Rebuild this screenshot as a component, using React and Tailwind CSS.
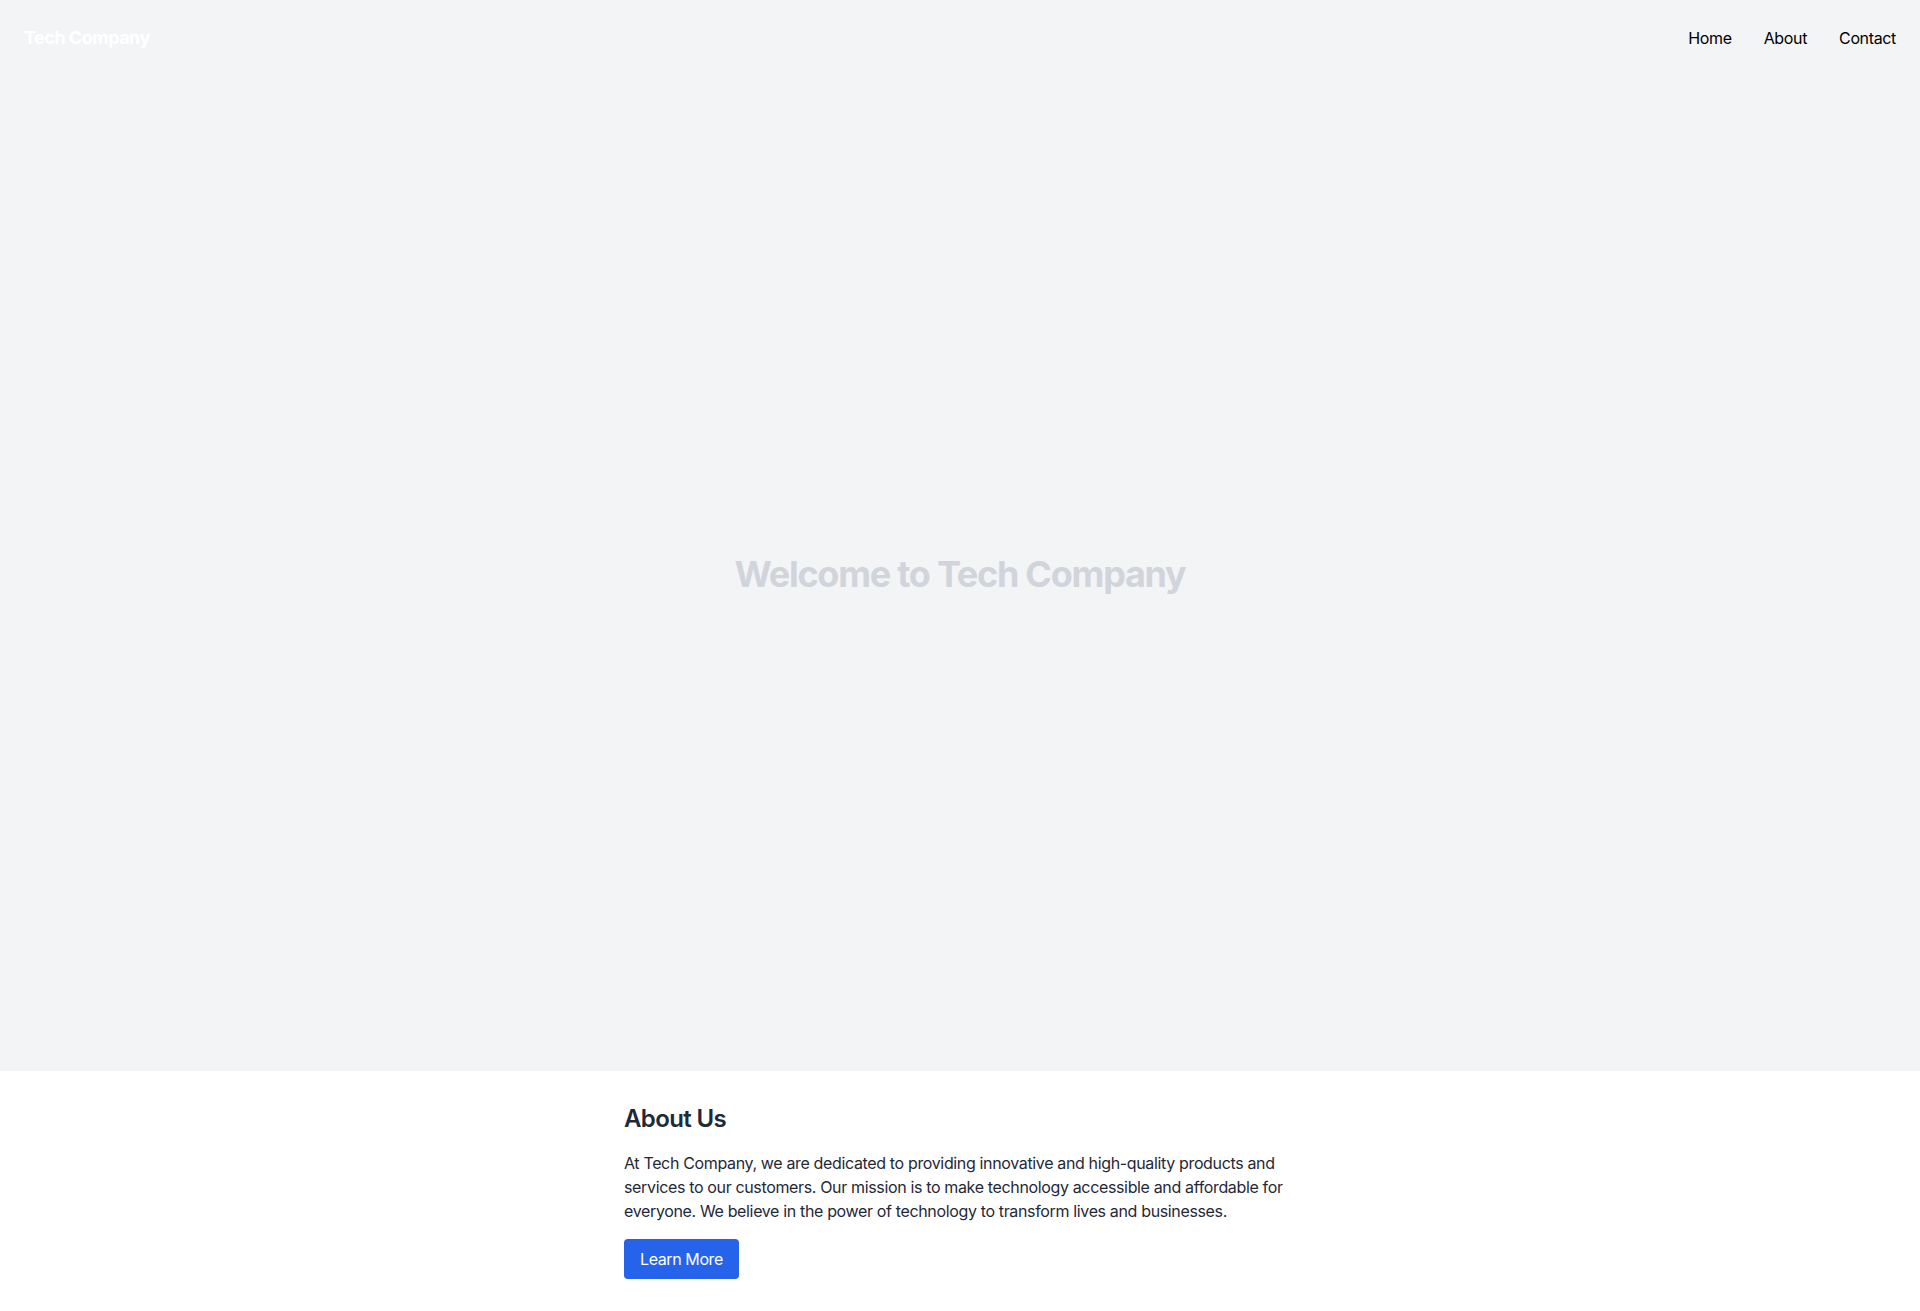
import React from 'react';

const App = () => {
  return (
    <div className="min-h-screen bg-white" style={{ fontFamily: 'Inter, "Noto Sans", sans-serif' }}>
      {/* Hero */}
      <section className="h-[1071px] bg-[#f3f4f6] flex flex-col">
        <nav className="flex items-center justify-between p-6">
          <div className="text-lg font-bold text-white tracking-[-0.028em]">Tech Company</div>
          <ul className="flex space-x-8 text-base text-black tracking-[-0.022em]">
            <li><a href="#">Home</a></li>
            <li><a href="#">About</a></li>
            <li><a href="#">Contact</a></li>
          </ul>
        </nav>
        <div className="flex-1 flex items-center justify-center">
          <h1 className="text-4xl font-bold text-[#d1d5db] tracking-[-0.035em]">Welcome to Tech Company</h1>
        </div>
      </section>

      {/* About */}
      <section className="max-w-2xl mx-auto py-8">
        <h2 className="text-2xl font-semibold text-[#1f2937] mb-4 tracking-[-0.026em]">About Us</h2>
        <p className="text-base text-[#1f2937] mb-4 tracking-[-0.022em]">
          At Tech Company, we are dedicated to providing innovative and high-quality products and services to our customers. Our mission is to make technology accessible and affordable for everyone. We believe in the power of technology to transform lives and businesses.
        </p>
        <button className="bg-[#2563eb] text-white px-4 py-2 rounded tracking-[-0.025em]">Learn More</button>
      </section>
    </div>
  );
};

export default App;
